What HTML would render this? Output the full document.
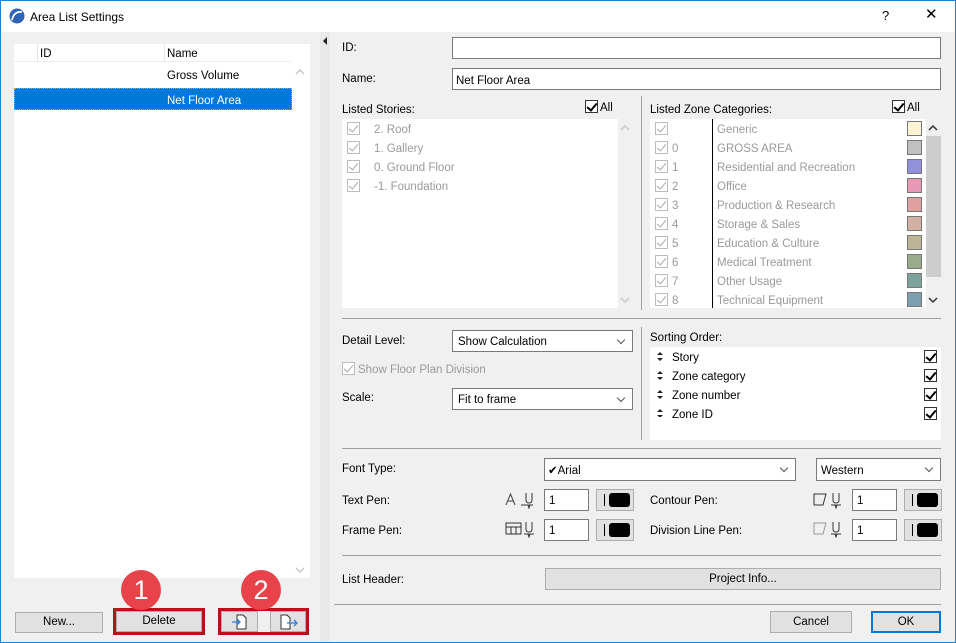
<!DOCTYPE html>
<html><head><meta charset="utf-8"><style>
*{box-sizing:border-box;margin:0;padding:0}
body{width:956px;height:643px;overflow:hidden;background:#f0f0f0;font-family:"Liberation Sans",sans-serif;font-size:11.5px;color:#000;position:relative}
.a{position:absolute}
.t{position:absolute;white-space:nowrap;line-height:14px;transform:translateY(1px)}
.g{color:#9a9a9a}
.w{background:#fff}
.in{position:absolute;background:#fff;border:1px solid #7a7a7a}
.btn{position:absolute;background:#e1e1e1;border:1px solid #adadad;text-align:center;line-height:19px}
.cb{position:absolute;width:13px;height:13px;border:1px solid #bcbcbc;background:#fff}
.cb::after{content:"";position:absolute;left:3px;top:0px;width:4px;height:8px;border:solid #a8a8a8;border-width:0 1.5px 1.5px 0;transform:rotate(40deg)}
.ck{position:absolute;width:13px;height:13px;border:1px solid #333;background:#fff}
.ck::after{content:"";position:absolute;left:3px;top:0px;width:4px;height:8px;border:solid #000;border-width:0 2px 2px 0;transform:rotate(40deg)}
.sw{position:absolute;width:15px;height:15px;border:1px solid #777}
.hl{position:absolute;height:1px;background:#a0a0a0}
.vl{position:absolute;width:1px;background:#a0a0a0}
.dd::after{content:"";position:absolute;right:8px;top:6px;width:5px;height:5px;border:solid #555;border-width:0 1px 1px 0;transform:rotate(45deg)}
.pen{position:absolute;background:#e1e1e1;border:1px solid #adadad;width:38px;height:22px}
.pen i{position:absolute;left:7px;top:4px;width:1px;height:12px;background:#000}
.pen b{position:absolute;left:12px;top:3px;width:21px;height:14px;background:#000;border-radius:3px}
.red{position:absolute;border:3px solid #b5121b}
.circ{position:absolute;width:40px;height:40px;border-radius:50%;background:#e8434a;color:#fff;font-size:27px;text-align:center;line-height:40px}
</style></head><body>
<div class="a" style="left:0;top:0;width:956px;height:643px;border:1px solid #1883d7;z-index:9;pointer-events:none"></div>
<div class="a w" style="left:0;top:0;width:956px;height:32px"></div>
<svg class="a" style="left:9px;top:8px" width="16" height="16"><circle cx="8" cy="8" r="7.5" fill="#2f63b5"/><path d="M3 12 Q5 3 13 4" stroke="#fff" stroke-width="1.8" fill="none"/></svg>
<div class="t" style="left:30px;top:9px;font-size:12px">Area List Settings</div>
<div class="t" style="left:882px;top:8px;font-size:13px">?</div>
<div class="t" style="left:925px;top:7px;font-size:15px">✕</div>

<!-- left list -->
<div class="a w" style="left:14px;top:44px;width:296px;height:534px"></div>
<div class="a" style="left:14px;top:44px;width:277px;height:18px;background:#fff;border-bottom:1px solid #eee"></div>
<div class="vl" style="left:37px;top:44px;height:18px;background:#e5e5e5"></div>
<div class="vl" style="left:164px;top:44px;height:18px;background:#e5e5e5"></div>
<div class="t" style="left:40px;top:46px">ID</div>
<div class="t" style="left:167px;top:46px">Name</div>
<div class="t" style="left:167px;top:68px">Gross Volume</div>
<div class="a" style="left:14px;top:88px;width:278px;height:22px;background:#0078d7;border:1px dotted #e8a030"></div>
<div class="t" style="left:167px;top:93px;color:#fff">Net Floor Area</div>
<svg class="a" style="left:295px;top:68px" width="10" height="8"><path d="M1 6l4-4 4 4" stroke="#c8c8c8" stroke-width="1.5" fill="none"/></svg>
<svg class="a" style="left:295px;top:566px" width="10" height="8"><path d="M1 2l4 4 4-4" stroke="#c8c8c8" stroke-width="1.5" fill="none"/></svg>

<div class="btn" style="left:15px;top:612px;width:88px;height:21px">New...</div>
<div class="btn" style="left:116px;top:611px;width:86px;height:21px">Delete</div>
<div class="btn" style="left:221px;top:611px;width:37px;height:21px"></div>
<div class="btn" style="left:270px;top:611px;width:36px;height:21px"></div>
<svg class="a" style="left:230px;top:613px" width="20" height="18"><path d="M7 2h6l3 3v11H7z" fill="#fff" stroke="#333"/><path d="M2 9h8M7 6l3 3-3 3" stroke="#2f7fd8" fill="none" stroke-width="1.3"/></svg>
<svg class="a" style="left:278px;top:613px" width="22" height="18"><path d="M3 2h6l3 3v11H3z" fill="#fff" stroke="#333"/><path d="M9 10h10M16 7l3 3-3 3" stroke="#2f7fd8" fill="none" stroke-width="1.3"/></svg>
<div class="red" style="left:113px;top:608px;width:92px;height:27px"></div>
<div class="red" style="left:218px;top:608px;width:91px;height:27px"></div>
<div class="circ" style="left:121px;top:570px">1</div>
<div class="circ" style="left:241px;top:570px">2</div>

<!-- splitter -->
<div class="a" style="left:320px;top:32px;width:10px;height:611px;background:#e9e9e9"></div>
<svg class="a" style="left:321px;top:36px" width="8" height="10"><path d="M6 1L2 5l4 4z" fill="#222"/></svg>

<!-- right -->
<div class="t" style="left:342px;top:40px">ID:</div>
<div class="in" style="left:452px;top:37px;width:489px;height:22px"></div>
<div class="t" style="left:342px;top:71px">Name:</div>
<div class="in" style="left:452px;top:68px;width:489px;height:22px"></div>
<div class="t" style="left:456px;top:73px">Net Floor Area</div>

<div class="t" style="left:342px;top:102px">Listed Stories:</div>
<div class="ck" style="left:585px;top:100px"></div><div class="t" style="left:600px;top:100px">All</div>
<div class="a w" style="left:342px;top:119px;width:276px;height:189px"></div>
<svg class="a" style="left:620px;top:124px" width="10" height="8"><path d="M1 6l4-4 4 4" stroke="#c8c8c8" stroke-width="1.5" fill="none"/></svg>
<svg class="a" style="left:620px;top:296px" width="10" height="8"><path d="M1 2l4 4 4-4" stroke="#c8c8c8" stroke-width="1.5" fill="none"/></svg>
<div class="cb" style="left:347px;top:122px"></div><div class="t g" style="left:374px;top:122px">2. Roof</div>
<div class="cb" style="left:347px;top:141px"></div><div class="t g" style="left:374px;top:141px">1. Gallery</div>
<div class="cb" style="left:347px;top:160px"></div><div class="t g" style="left:374px;top:160px">0. Ground Floor</div>
<div class="cb" style="left:347px;top:179px"></div><div class="t g" style="left:374px;top:179px">-1. Foundation</div>

<div class="vl" style="left:641px;top:96px;height:214px"></div>

<div class="t" style="left:650px;top:102px">Listed Zone Categories:</div>
<div class="ck" style="left:892px;top:100px"></div><div class="t" style="left:907px;top:100px">All</div>
<div class="a w" style="left:650px;top:119px;width:276px;height:189px"></div>
<div class="a" style="left:926px;top:136px;width:15px;height:141px;background:#cdcdcd"></div>
<svg class="a" style="left:928px;top:124px" width="10" height="8"><path d="M1 6l4-4 4 4" stroke="#333" stroke-width="1.5" fill="none"/></svg>
<svg class="a" style="left:928px;top:296px" width="10" height="8"><path d="M1 2l4 4 4-4" stroke="#333" stroke-width="1.5" fill="none"/></svg>
<div class="a" style="left:712px;top:119px;width:1px;height:189px;background:#000"></div>

<div class="cb" style="left:655px;top:122px"></div><div class="t g" style="left:717px;top:122px">Generic</div><div class="sw" style="left:907px;top:121px;background:#fdf4d5"></div>
<div class="cb" style="left:655px;top:141px"></div><div class="t g" style="left:672px;top:141px">0</div><div class="t g" style="left:717px;top:141px">GROSS AREA</div><div class="sw" style="left:907px;top:140px;background:#c0c0c0"></div>
<div class="cb" style="left:655px;top:160px"></div><div class="t g" style="left:672px;top:160px">1</div><div class="t g" style="left:717px;top:160px">Residential and Recreation</div><div class="sw" style="left:907px;top:159px;background:#9090dc"></div>
<div class="cb" style="left:655px;top:179px"></div><div class="t g" style="left:672px;top:179px">2</div><div class="t g" style="left:717px;top:179px">Office</div><div class="sw" style="left:907px;top:178px;background:#e898b4"></div>
<div class="cb" style="left:655px;top:198px"></div><div class="t g" style="left:672px;top:198px">3</div><div class="t g" style="left:717px;top:198px">Production &amp; Research</div><div class="sw" style="left:907px;top:197px;background:#e0a0a0"></div>
<div class="cb" style="left:655px;top:217px"></div><div class="t g" style="left:672px;top:217px">4</div><div class="t g" style="left:717px;top:217px">Storage &amp; Sales</div><div class="sw" style="left:907px;top:216px;background:#d4b0a4"></div>
<div class="cb" style="left:655px;top:236px"></div><div class="t g" style="left:672px;top:236px">5</div><div class="t g" style="left:717px;top:236px">Education &amp; Culture</div><div class="sw" style="left:907px;top:235px;background:#bcb494"></div>
<div class="cb" style="left:655px;top:255px"></div><div class="t g" style="left:672px;top:255px">6</div><div class="t g" style="left:717px;top:255px">Medical Treatment</div><div class="sw" style="left:907px;top:254px;background:#98ac8c"></div>
<div class="cb" style="left:655px;top:274px"></div><div class="t g" style="left:672px;top:274px">7</div><div class="t g" style="left:717px;top:274px">Other Usage</div><div class="sw" style="left:907px;top:273px;background:#7ca49c"></div>
<div class="cb" style="left:655px;top:293px"></div><div class="t g" style="left:672px;top:293px">8</div><div class="t g" style="left:717px;top:293px">Technical Equipment</div><div class="sw" style="left:907px;top:292px;background:#7ca0b0"></div>

<div class="hl" style="left:342px;top:318px;width:599px"></div>

<div class="t" style="left:342px;top:333px">Detail Level:</div>
<div class="in dd" style="left:452px;top:330px;width:181px;height:22px"></div>
<div class="t" style="left:458px;top:334px">Show Calculation</div>
<div class="cb" style="left:342px;top:362px"></div><div class="t g" style="left:358px;top:362px">Show Floor Plan Division</div>
<div class="t" style="left:342px;top:390px">Scale:</div>
<div class="in dd" style="left:452px;top:388px;width:181px;height:22px"></div>
<div class="t" style="left:458px;top:392px">Fit to frame</div>

<div class="vl" style="left:641px;top:327px;height:113px"></div>
<div class="t" style="left:650px;top:330px">Sorting Order:</div>
<div class="a w" style="left:650px;top:347px;width:291px;height:93px"></div>
<svg class="a" style="left:657px;top:352px" width="6" height="65"><g fill="#222"><path d="M0 3l3-3 3 3zM0 6l3 3 3-3z"/><path transform="translate(0,19)" d="M0 3l3-3 3 3zM0 6l3 3 3-3z"/><path transform="translate(0,38)" d="M0 3l3-3 3 3zM0 6l3 3 3-3z"/><path transform="translate(0,57)" d="M0 3l3-3 3 3zM0 6l3 3 3-3z"/></g></svg>
<div class="t" style="left:672px;top:350px">Story</div><div class="ck" style="left:924px;top:350px"></div>
<div class="t" style="left:672px;top:369px">Zone category</div><div class="ck" style="left:924px;top:369px"></div>
<div class="t" style="left:672px;top:388px">Zone number</div><div class="ck" style="left:924px;top:388px"></div>
<div class="t" style="left:672px;top:407px">Zone ID</div><div class="ck" style="left:924px;top:407px"></div>

<div class="hl" style="left:342px;top:448px;width:599px"></div>

<div class="t" style="left:342px;top:461px">Font Type:</div>
<div class="in dd" style="left:544px;top:458px;width:252px;height:23px"></div>
<div class="t" style="left:548px;top:463px">&#10004;Arial</div>
<div class="in dd" style="left:816px;top:458px;width:125px;height:23px"></div>
<div class="t" style="left:821px;top:463px">Western</div>

<div class="t" style="left:342px;top:493px">Text Pen:</div>
<svg class="a" style="left:505px;top:491px" width="32" height="18"><path d="M1 14L5.5 3 10 14M3 10h5" fill="none" stroke="#444"/><path d="M21 2v7q0 3 3 3t3-3V2M16 14h12M23 14l1 3 1-3" fill="none" stroke="#333"/></svg>
<div class="in" style="left:544px;top:489px;width:45px;height:22px"></div><div class="t" style="left:549px;top:493px">1</div>
<div class="pen" style="left:596px;top:489px"><i></i><b></b></div>
<div class="t" style="left:650px;top:493px">Contour Pen:</div>
<svg class="a" style="left:813px;top:491px" width="32" height="18"><path d="M1 3h12l-3 11H1z" fill="none" stroke="#333"/><path d="M20 2v7q0 3 3 3t3-3V2M18 14h10M22 14l1 3 1-3" fill="none" stroke="#333"/></svg>
<div class="in" style="left:852px;top:489px;width:45px;height:22px"></div><div class="t" style="left:857px;top:493px">1</div>
<div class="pen" style="left:904px;top:489px"><i></i><b></b></div>

<div class="t" style="left:342px;top:523px">Frame Pen:</div>
<svg class="a" style="left:505px;top:520px" width="32" height="18"><path d="M1 3h15v11H1zM1 7h15M6 7v7M11 7v7" fill="none" stroke="#333"/><path d="M21 2v7q0 3 3 3t3-3V2M19 14h10M23 14l1 3 1-3" fill="none" stroke="#333"/></svg>
<div class="in" style="left:544px;top:519px;width:45px;height:22px"></div><div class="t" style="left:549px;top:523px">1</div>
<div class="pen" style="left:596px;top:519px"><i></i><b></b></div>
<div class="t" style="left:650px;top:523px">Division Line Pen:</div>
<svg class="a" style="left:813px;top:520px" width="32" height="18"><path d="M1 3h12l-3 11H1z" fill="none" stroke="#999"/><path d="M20 2v7q0 3 3 3t3-3V2M18 14h10M22 14l1 3 1-3" fill="none" stroke="#333"/></svg>
<div class="in" style="left:852px;top:519px;width:45px;height:22px"></div><div class="t" style="left:857px;top:523px">1</div>
<div class="pen" style="left:904px;top:519px"><i></i><b></b></div>

<div class="hl" style="left:342px;top:555px;width:599px"></div>
<div class="t" style="left:342px;top:572px">List Header:</div>
<div class="btn" style="left:545px;top:568px;width:396px;height:22px;line-height:20px">Project Info...</div>

<div class="hl" style="left:334px;top:604px;width:607px"></div>
<div class="btn" style="left:770px;top:611px;width:82px;height:22px;line-height:20px">Cancel</div>
<div class="btn" style="left:871px;top:611px;width:70px;height:22px;line-height:18px;border:2px solid #0078d7">OK</div>
</body></html>
